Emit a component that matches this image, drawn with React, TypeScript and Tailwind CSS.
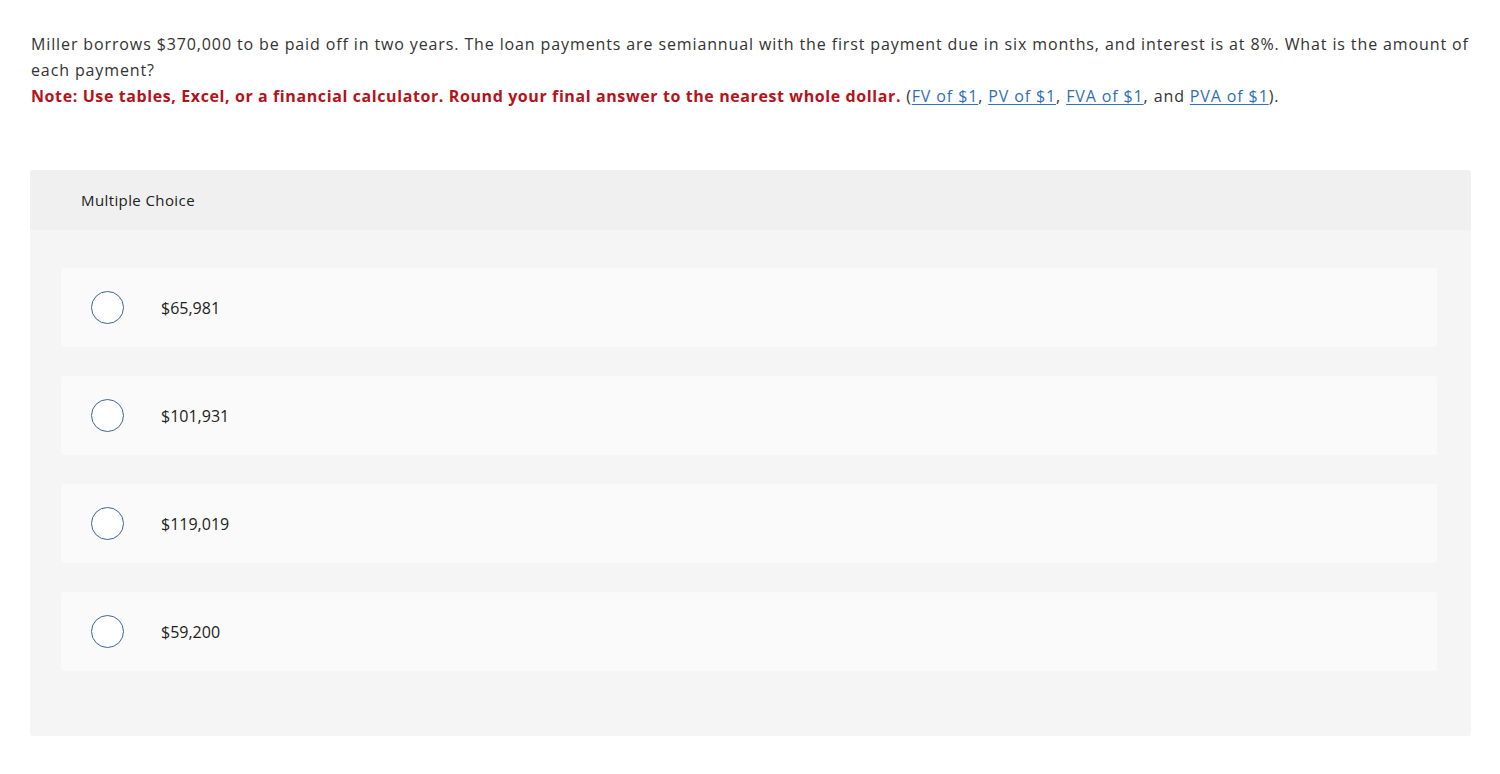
import React from "react";

const options = ["$65,981", "$101,931", "$119,019", "$59,200"];

function Link({ children }: { children: React.ReactNode }) {
  return <span className="text-[#2f6fb7] underline underline-offset-2">{children}</span>;
}

export default function App() {
  return (
    <div className="min-h-screen bg-white px-[30px] pt-[31px] text-[#333] font-['Open_Sans','Liberation_Sans',sans-serif]">
      <div className="pl-[1px] text-[16px] leading-[26px] tracking-[0.88px]">
        <p>
          Miller borrows $370,000 to be paid off in two years. The loan payments are semiannual with the first payment due in six months, and interest is at 8%. What is the amount of each payment?
        </p>
        <p>
          <span className="font-bold text-[#b5121b] tracking-[0.6px]">
            Note: Use tables, Excel, or a financial calculator. Round your final answer to the nearest whole dollar.
          </span>{" "}
          (<Link>FV of $1</Link>, <Link>PV of $1</Link>, <Link>FVA of $1</Link>, and <Link>PVA of $1</Link>).
        </p>
      </div>

      <div className="mt-[61px] w-[1441px] rounded-[3px] bg-[#f5f5f5] overflow-hidden">
        <div className="h-[60px] bg-[#f0f0f0] flex items-center pl-[51px] text-[15px] tracking-[0.4px] text-[#222]">
          Multiple Choice
        </div>
        <div className="pl-[31px] pr-[34px] pt-[38px] pb-[65px] flex flex-col gap-[29px]">
          {options.map((o) => (
            <div key={o} className="h-[79px] rounded-[3px] bg-[#fafafa] flex items-center pl-[30px]">
              <div className="w-[33px] h-[33px] rounded-full border-[1.5px] border-[#3b6593] bg-white" />
              <span className="ml-[37px] text-[16px] text-[#222]">{o}</span>
            </div>
          ))}
        </div>
      </div>
    </div>
  );
}
